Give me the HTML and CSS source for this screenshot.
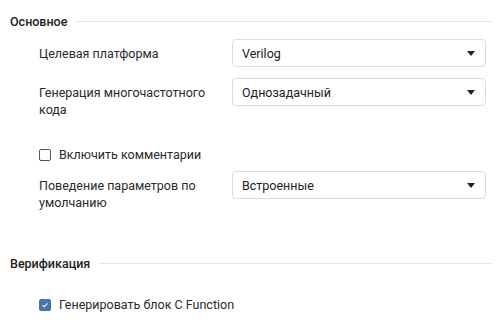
FILE: index.html
```html
<!DOCTYPE html>
<html lang="ru">
<head>
    <meta charset="UTF-8">
    <title>Настройки генерации</title>
    <link rel="stylesheet" href="styles.css">
</head>
<body>
    <div class="settings">
        <div class="section-title">
            <h3>Основное</h3>
            <div class="line"></div>
        </div>

        <div class="group">
            <div class="field first">
                <label>Целевая платформа</label>
                <div class="select"><span>Verilog</span><i class="caret"></i></div>
            </div>
            <div class="field">
                <label>Генерация многочастотного кода</label>
                <div class="select"><span>Однозадачный</span><i class="caret"></i></div>
            </div>
            <div class="check check-comments">
                <span class="box"></span>
                <span>Включить комментарии</span>
            </div>
            <div class="field after-check">
                <label>Поведение параметров по умолчанию</label>
                <div class="select"><span>Встроенные</span><i class="caret"></i></div>
            </div>
        </div>

        <div class="section-title second">
            <h3>Верификация</h3>
            <div class="line"></div>
        </div>

        <div class="group">
            <div class="check check-verify">
                <span class="box checked">
                    <svg width="8" height="8" viewBox="0 0 8 8"><path d="M1.5 4.2 L3.2 5.8 L6.5 2.3" fill="none" stroke="#fff" stroke-width="1.1"/></svg>
                </span>
                <span>Генерировать блок C Function</span>
            </div>
        </div>
    </div>
</body>
</html>
```

FILE: styles.css
```css
body {
    margin: 0;
    background: #fff;
    font-family: Roboto, "Noto Sans", Arial, sans-serif;
    font-size: 12.5px;
    color: #2a2a2a;
}
.settings {
    padding: 12px 6px 0 10px;
}
.section-title {
    display: flex;
    align-items: center;
    gap: 9px;
    height: 18px;
}
.section-title h3 {
    margin: 0;
    font-size: 12.5px;
    font-weight: 500;
    color: #222;
}
.section-title .line {
    flex: 1;
    height: 1px;
    background: #e6e6e6;
}
.section-title.second { margin-top: 43px; }
.group { padding-left: 29px; }
.field {
    display: grid;
    grid-template-columns: 193px 254px;
    align-items: start;
    margin-top: 11px;
}
.field.first { margin-top: 9px; }
.field.after-check { margin-top: 8px; }
.field label {
    padding-top: 6px;
    line-height: 17px;
    padding-right: 20px;
}
.select {
    box-sizing: border-box;
    height: 28px;
    border: 1px solid #dcdcdc;
    border-radius: 4px;
    display: flex;
    align-items: center;
    justify-content: space-between;
    padding: 1px 10px 0 9px;
    color: #222;
}
.caret {
    width: 0;
    height: 0;
    margin-top: -1px;
    border-left: 4px solid transparent;
    border-right: 4px solid transparent;
    border-top: 5px solid #222;
}
.check {
    display: flex;
    align-items: center;
    gap: 8px;
    height: 17px;
}
.check-comments { margin-top: 28px; }
.check-verify { margin-top: 24px; }
.box {
    box-sizing: border-box;
    width: 12px;
    height: 12px;
    border: 1px solid #555;
    border-radius: 2px;
    display: flex;
    align-items: center;
    justify-content: center;
}
.box.checked {
    background: #4a74a6;
    border-color: #4a74a6;
}
```
